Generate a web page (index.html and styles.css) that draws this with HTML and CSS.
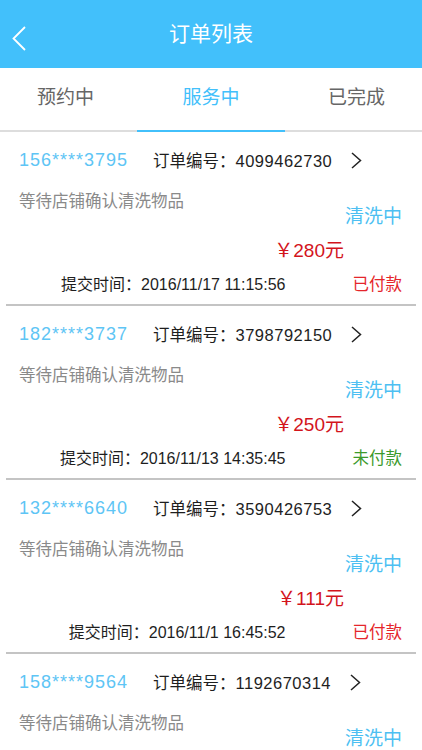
FILE: index.html
```html
<!DOCTYPE html>
<html lang="zh-CN">
<head>
    <meta charset="UTF-8">
    <meta name="viewport" content="width=device-width, initial-scale=1.0">
    <title>订单列表</title>
    <link rel="stylesheet" href="styles.css">
</head>
<body>
    <header class="topbar">
        <span class="back">
            <svg width="14" height="25" viewBox="0 0 14 25"><path d="M13 1 L1.5 12.5 L13 24" fill="none" stroke="#fff" stroke-width="1.8"/></svg>
        </span>
        <h1>订单列表</h1>
    </header>

    <nav class="tabs">
        <span class="tab">预约中</span>
        <span class="tab active">服务中</span>
        <span class="tab">已完成</span>
    </nav>

    <div class="orders">
        <div class="order">
            <div class="row-head">
                <span class="phone">156****3795</span>
                <span class="order-no">订单编号：<span class="num">4099462730</span></span>
                <svg class="arrow" width="11" height="17" viewBox="0 0 11 17"><path d="M1 1 L9.5 8.5 L1 16" fill="none" stroke="#222" stroke-width="1.5"/></svg>
            </div>
            <div class="row-info">
                <span class="desc">等待店铺确认清洗物品</span>
                <span class="state">清洗中</span>
            </div>
            <div class="price">￥280元</div>
            <div class="row-time">
                <span class="time">提交时间：2016/11/17 11:15:56</span>
                <span class="pay paid">已付款</span>
            </div>
        </div>

        <div class="order">
            <div class="row-head">
                <span class="phone">182****3737</span>
                <span class="order-no">订单编号：<span class="num">3798792150</span></span>
                <svg class="arrow" width="11" height="17" viewBox="0 0 11 17"><path d="M1 1 L9.5 8.5 L1 16" fill="none" stroke="#222" stroke-width="1.5"/></svg>
            </div>
            <div class="row-info">
                <span class="desc">等待店铺确认清洗物品</span>
                <span class="state">清洗中</span>
            </div>
            <div class="price">￥250元</div>
            <div class="row-time">
                <span class="time">提交时间：2016/11/13 14:35:45</span>
                <span class="pay unpaid">未付款</span>
            </div>
        </div>

        <div class="order">
            <div class="row-head">
                <span class="phone">132****6640</span>
                <span class="order-no">订单编号：<span class="num">3590426753</span></span>
                <svg class="arrow" width="11" height="17" viewBox="0 0 11 17"><path d="M1 1 L9.5 8.5 L1 16" fill="none" stroke="#222" stroke-width="1.5"/></svg>
            </div>
            <div class="row-info">
                <span class="desc">等待店铺确认清洗物品</span>
                <span class="state">清洗中</span>
            </div>
            <div class="price">￥111元</div>
            <div class="row-time">
                <span class="time">提交时间：2016/11/1 16:45:52</span>
                <span class="pay paid">已付款</span>
            </div>
        </div>

        <div class="order">
            <div class="row-head">
                <span class="phone">158****9564</span>
                <span class="order-no">订单编号：<span class="num">1192670314</span></span>
                <svg class="arrow" width="11" height="17" viewBox="0 0 11 17"><path d="M1 1 L9.5 8.5 L1 16" fill="none" stroke="#222" stroke-width="1.5"/></svg>
            </div>
            <div class="row-info">
                <span class="desc">等待店铺确认清洗物品</span>
                <span class="state">清洗中</span>
            </div>
            <div class="price">￥98元</div>
            <div class="row-time">
                <span class="time">提交时间：2016/10/30 09:12:33</span>
                <span class="pay paid">已付款</span>
            </div>
        </div>
    </div>
</body>
</html>
```

FILE: styles.css
```css
body {
    margin: 0;
    padding: 0;
    background-color: #fff;
    font-family: "Liberation Sans", "Noto Sans CJK SC", sans-serif;
    color: #222;
    height: 750px;
    overflow: hidden;
}

.topbar {
    height: 68px;
    background-color: #42c0fb;
    display: flex;
    align-items: center;
    justify-content: center;
    position: relative;
}

.topbar h1 {
    margin: 0;
    color: #fff;
    font-size: 21px;
    font-weight: normal;
    line-height: 68px;
}

.topbar .back {
    position: absolute;
    left: 12px;
    top: 26px;
    height: 25px;
}

.tabs {
    display: flex;
    justify-content: space-between;
    padding: 0 37px;
    height: 62px;
    border-bottom: 2px solid #ddd;
}

.tab {
    font-size: 19px;
    color: #666;
    line-height: 60px;
    position: relative;
}

.tab.active {
    color: #42c0fb;
}

.tab.active::after {
    content: "";
    position: absolute;
    left: -45px;
    right: -45px;
    bottom: -2px;
    height: 2px;
    background-color: #42c0fb;
}

.order {
    margin: 0 6px;
    padding: 16px 14px 9px 13px;
    border-bottom: 2px solid #c4c4c4;
}

.row-head {
    display: flex;
    align-items: center;
    height: 24px;
}

.phone {
    width: 134px;
    color: #5ec5f5;
    font-size: 18px;
    letter-spacing: 1px;
}

.order-no {
    font-size: 16.5px;
    color: #1e1e1e;
}

.order-no .num {
    letter-spacing: 0.5px;
}

.arrow {
    margin-left: 19px;
}

.row-info {
    display: flex;
    justify-content: space-between;
    align-items: flex-start;
    margin-top: 17px;
    height: 40px;
}

.desc {
    font-size: 16.5px;
    color: #8a8a8a;
    line-height: 24px;
}

.state {
    font-size: 19px;
    color: #4dbff2;
    line-height: 24px;
    margin-top: 16px;
}

.price {
    text-align: right;
    margin: 10px 58px 0 0;
    font-size: 19px;
    color: #d3141c;
    line-height: 24px;
}

.row-time {
    display: flex;
    justify-content: flex-end;
    align-items: center;
    gap: 67px;
    margin-top: 8px;
    height: 24px;
}

.time {
    font-size: 16px;
    color: #1e1e1e;
}

.pay {
    font-size: 16.5px;
}

.pay.paid {
    color: #e5262b;
}

.pay.unpaid {
    color: #3c9a2c;
}
```
